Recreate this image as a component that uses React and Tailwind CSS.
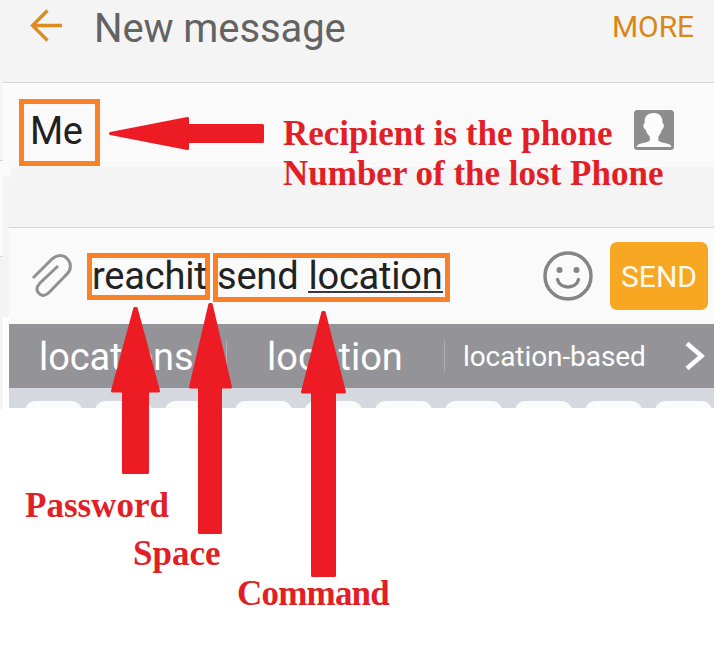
const KEYS = Array.from({ length: 10 }, (_, i) => i);

function Header() {
  return (
    <header className="flex h-[83px] items-start justify-between border-b border-[#d6d6d6] bg-[#f4f4f4] pl-[26px] pr-5 pt-[7px]">
      <div className="flex h-10 items-center">
        <svg width="36" height="36" viewBox="0 0 36 36" fill="none" stroke="#df8c1e" strokeWidth="3.4" className="mr-[29px] -mt-1">
          <path d="M33 18.500H4M18.500 3.500L3.500 18.500L18.500 33.500" />
        </svg>
        <h1 className="pt-[3px] text-[40px] leading-10 tracking-[-0.1px] text-[#636363]">New message</h1>
      </div>
      <span className="text-[30px] leading-10 tracking-[-0.1px] text-[#d98718]">MORE</span>
    </header>
  );
}

function RecipientRow() {
  return (
    <div className="flex h-[84px] items-start justify-between bg-[#fafafa] pl-4 pr-10 pt-4">
      <div className="flex h-[67px] w-[81px] items-center border-[5px] border-[#f98228] pb-[3px] pl-1.5 text-[38px] leading-none tracking-[-0.4px] text-[#202020]">
        Me
      </div>
      <svg width="40" height="40" viewBox="0 0 40 40" className="mt-[11px]">
        <rect width="40" height="40" rx="3.5" fill="#8d8d8d" />
        <path
          d="M19.5 3C25 2.500 29 6.500 28.500 13C30.500 13.500 30.300 18.500 28 19.500C27 23 25.800 25 24.300 26.500V30.500C27 33.500 37 32.500 37.500 37H2.500C3 32.500 13 33.500 15.800 30.500V26.500C14 25 12.600 23 11.500 19.500C9 18.500 8.800 14 10.800 13C10 7 13 3.300 19.500 3Z"
          fill="#fcfcfc"
        />
      </svg>
    </div>
  );
}

function ComposeRow() {
  return (
    <div className="flex h-[97px] items-center border-t border-[#d6d6d6] bg-[#fafafa] pr-1.5">
      <svg width="44" height="48" viewBox="31 252 44 48" fill="none" stroke="#909090" strokeWidth="3" className="ml-[22px]">
        <path d="M33 278L51.500 259.500C56.500 254.500 63 254.500 67 258.500C71.500 263 71.500 269.500 67 274L50 291.500C46 296 42 296.500 39 293.500C36 290.500 36.300 287 40 283L58 266" />
      </svg>
      <div className="ml-3 mt-1 flex h-[50px] items-start text-[38px] leading-[46px] tracking-[-0.2px] text-[#222]">
        <div className="h-[47px] w-[123px] whitespace-nowrap border-[5px] border-[#f98228]">
          <div className="-mt-[5px]">reachit</div>
        </div>
        <div className="ml-[3px] h-[49px] w-[237px] whitespace-nowrap border-[5px] border-[#f98228]">
          <div className="-ml-px -mt-[5px] flex gap-2.5">
            <span>send</span>
            <span className="h-10 border-b-2 border-[#383840]">location</span>
          </div>
        </div>
      </div>
      <svg width="50" height="50" viewBox="0 0 50 50" fill="none" stroke="#858585" className="ml-auto mr-[17px]">
        <circle cx="25" cy="25" r="23" strokeWidth="3.500" />
        <circle cx="16.500" cy="19" r="3" fill="#858585" stroke="none" />
        <circle cx="33.500" cy="19" r="3" fill="#858585" stroke="none" />
        <path d="M14.500 28.500C17 38.500 33 38.500 35.500 28.500" strokeWidth="3.300" strokeLinecap="round" />
      </svg>
      <button className="h-[68px] w-[98px] rounded-[7px] bg-[#f8a723] pt-0.5 text-[30px] leading-10 text-[#fffbed]">
        SEND
      </button>
    </div>
  );
}

function Suggestions() {
  return (
    <div className="flex h-16 w-[705px] items-center bg-[#949398] text-[38px] leading-10 text-white">
      <span className="ml-[30px] mt-0.5 w-[187px] shrink-0 tracking-[-0.1px]">locations</span>
      <span className="h-[30px] w-px shrink-0 bg-[#b0afb5]" />
      <span className="ml-[40px] mt-0.5 w-[177px] shrink-0">location</span>
      <span className="h-[30px] w-px shrink-0 bg-[#b0afb5]" />
      <span className="ml-[18px] mt-0.5 text-[28px] tracking-[-0.08px]">location-based</span>
      <svg width="22" height="32" viewBox="0 0 22 32" fill="none" stroke="#fff" strokeWidth="4.500" className="ml-auto mr-2">
        <path d="M3 3.500L17.500 16L3 28.500" />
      </svg>
    </div>
  );
}

function Keyboard() {
  return (
    <div className="flex h-5 gap-[13px] overflow-hidden bg-[#d5d8df] pl-4 pt-[13px]">
      {KEYS.map((k) => (
        <div key={k} className="h-6 w-[57px] shrink-0 rounded-[10px] bg-[#fafbfb]" />
      ))}
    </div>
  );
}

function Arrows() {
  return (
    <svg
      width="728"
      height="656"
      viewBox="0 0 728 656"
      className="absolute left-0 top-0"
      fill="#ed1c24"
      stroke="#ed1c24"
      strokeWidth="3"
      strokeLinejoin="round"
    >
      <path d="M110.500 133.500L187.500 118.500V125.500H262.500V141.500H187.500V148.500Z" />
      <path d="M134.800 308.500H136.200L158.500 391H147.500V472.500H123.500V391H112.500Z" />
      <path d="M209.800 304.500H211.200L230.500 387H220.500V532.500H199.500V387H190.500Z" />
      <path d="M322.800 312.500H324.200L344.500 392H334.500V575.500H312.500V392H302.500Z" />
    </svg>
  );
}

export default function App() {
  return (
    <main className="relative h-[656px] w-[728px] overflow-hidden bg-white font-['Roboto',sans-serif]">
      <div className="flex h-[409px] w-[714px]">
        <div className="flex w-[3px] flex-col bg-[#f4f4f4]">
          <div className="h-40" />
          <div className="h-[97px] border-y border-[#d6d6d6] bg-[#fafafa]" />
        </div>
        <div className="flex w-[711px] flex-col">
          <Header />
          <RecipientRow />
          <div className="h-[60px] bg-[#f4f4f4]">
            <div className="h-2.5 w-2 bg-[#fafafa]" />
          </div>
          <div className="flex">
            <div className="h-[90px] w-1.5 bg-[#f4f4f4]" />
            <div className="w-[705px]">
              <ComposeRow />
              <Suggestions />
              <Keyboard />
            </div>
          </div>
        </div>
      </div>
      <Arrows />
      <div className="font-['Liberation_Serif',serif] text-[35px] font-bold leading-10 text-[#e21f26]">
        <p className="absolute left-[283px] top-[114px] whitespace-nowrap">
          Recipient is the phone
          <br />
          Number of the lost Phone
        </p>
        <p className="absolute left-[25px] top-[486px]">Password</p>
        <p className="absolute left-[133px] top-[534px]">Space</p>
        <p className="absolute left-[237px] top-[574px] tracking-[-0.8px]">Command</p>
      </div>
    </main>
  );
}
